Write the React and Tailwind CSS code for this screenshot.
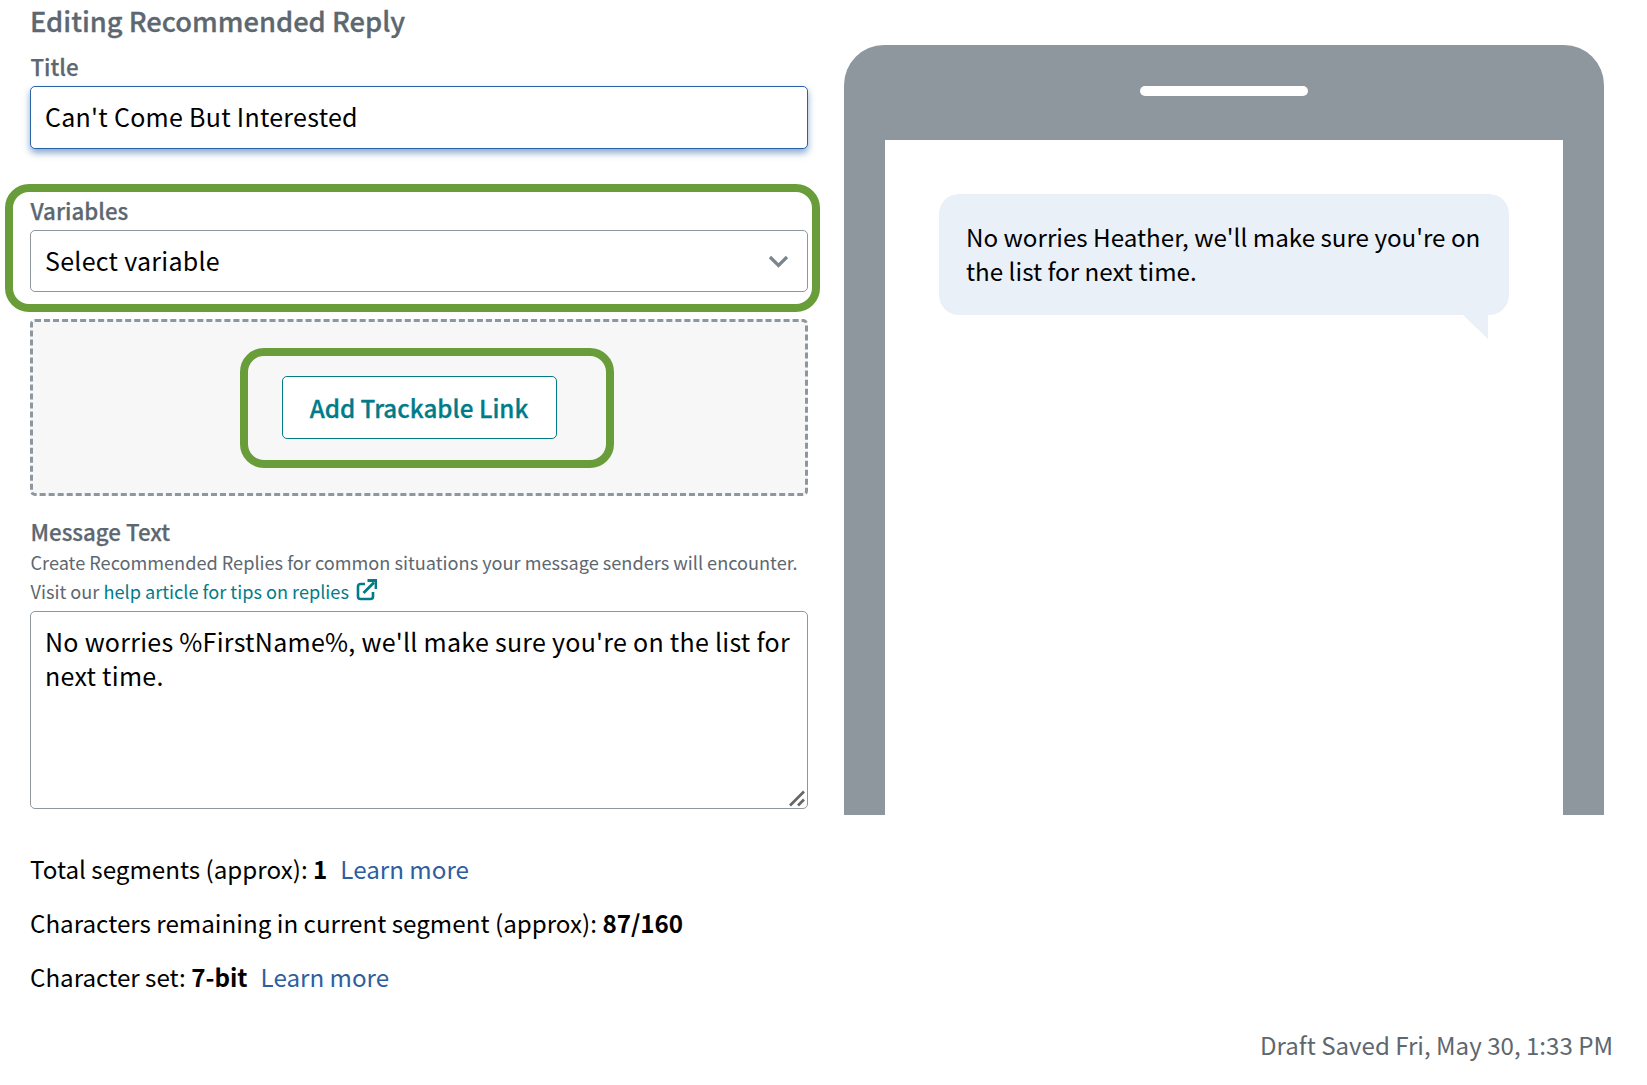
export default function App() {
  return (
    <div className="relative w-[1647px] h-[1085px] bg-white overflow-hidden font-['Noto_Sans_CJK_JP','Liberation_Sans',sans-serif] text-black">
      <div className="flex pl-[30px] gap-[36px]">
        <div className="w-[778px] shrink-0 flex flex-col">
          <h1 className="h-[44px] leading-[41px] text-[27.3px] font-medium text-[#5d6770] [-webkit-text-stroke:0.3px_#5d6770]">Editing Recommended Reply</h1>
          <label className="mt-[11px] ml-[0.5px] h-[22px] leading-[22px] text-[22.3px] font-medium text-[#5d6770] [-webkit-text-stroke:0.25px_#5d6770]">Title</label>
          <input readOnly value="Can't Come But Interested" className="mt-[9px] h-[63px] w-full rounded-[5px] border border-[#2a62a8] bg-white px-[14px] pb-[4px] text-[25px] tracking-[0.28px] shadow-[0_4px_7px_rgba(42,98,168,0.55)] outline-none" />
          <label className="mt-[50px] ml-[0.5px] h-[22px] leading-[22px] text-[22.3px] font-medium text-[#5d6770] [-webkit-text-stroke:0.25px_#5d6770]">Variables</label>
          <div className="mt-[9px] h-[62px] w-full rounded-[5px] border border-[#8f979e] bg-white pl-[14px] pr-[18px] flex items-center justify-between text-[25px] tracking-[0.28px]">
            <span>Select variable</span>
            <svg width="21" height="13" viewBox="0 0 21 13" fill="none"><path d="M2 2l8.500 8.500L19 2" stroke="#7b858d" strokeWidth="3.200" /></svg>
          </div>
          <div className="mt-[27px] h-[177px] rounded-[5px] border-[3px] border-dashed border-[#8f979e] bg-[#f7f7f7] flex items-center justify-center">
            <button className="h-[63px] w-[275px] pt-[1px] rounded-[5px] border border-[#007c89] bg-white text-[24.2px] font-medium text-[#007c89] [-webkit-text-stroke:0.3px_#007c89]">Add Trackable Link</button>
          </div>
          <label className="mt-[24px] ml-[0.5px] h-[22px] leading-[22px] text-[22.3px] font-medium text-[#5d6770] [-webkit-text-stroke:0.25px_#5d6770]">Message Text</label>
          <p className="mt-[6px] ml-[0.5px] text-[18.15px] leading-[29px] text-[#5d6770]">
            Create Recommended Replies for common situations your message senders will encounter.<br />
            Visit our <span className="text-[#007c89]">help article for tips on replies</span>
            <svg className="inline-block ml-[7px] align-[-2px]" width="21" height="22" viewBox="0 0 21 22" fill="none">
              <path d="M9 5H4.500A2.500 2.500 0 0 0 2 7.500V17.500A2.500 2.500 0 0 0 4.500 20H14.500A2.500 2.500 0 0 0 17 17.500V13" stroke="#007c89" strokeWidth="2.600" />
              <path d="M7.500 14L18 3.500" stroke="#007c89" strokeWidth="2.800" />
              <path d="M11.500 1.500H20V10" stroke="#007c89" strokeWidth="2.800" />
            </svg>
          </p>
          <div className="relative mt-[5px] h-[198px]">
            <textarea readOnly value="No worries %FirstName%, we'll make sure you're on the list for next time." className="block h-full w-full resize-none rounded-[5px] border border-[#8f979e] bg-white px-[14px] py-[12px] text-[25px] leading-[34px] tracking-[0.27px] outline-none" />
            <svg className="absolute right-[2px] bottom-[2px]" width="17" height="17" viewBox="0 0 17 17" fill="none">
              <path d="M1 15.500L15 1.500" stroke="#666" strokeWidth="2.600" />
              <path d="M9 15.500L15 9.500" stroke="#666" strokeWidth="2.600" />
            </svg>
          </div>
          <div className="mt-[33px] text-[24.2px] leading-[54px]">
            <div>Total segments (approx): <b className="font-bold">1</b><a className="ml-[13px] text-[#2d5fa0]">Learn more</a></div>
            <div>Characters remaining in current segment (approx): <b className="font-bold">87/160</b></div>
            <div>Character set: <b className="font-bold">7-bit</b><a className="ml-[13px] text-[#2d5fa0]">Learn more</a></div>
          </div>
        </div>
        <div className="mt-[45px] h-[770px] w-[760px] shrink-0 rounded-t-[40px] bg-[#8f979e] flex flex-col">
          <div className="mt-[41px] mx-auto h-[10px] w-[168px] rounded-[5px] bg-white" />
          <div className="mt-[44px] mx-[41px] flex-1 bg-white pt-[54px] px-[54px]">
            <div className="relative rounded-[20px] bg-[#e9f0f8] pl-[27px] pr-[20px] pt-[26px] pb-[27px] text-[24.2px] leading-[34px]">
              No worries Heather, we'll make sure you're on the list for next time.
              <svg className="absolute top-full right-[21px]" width="25" height="24" viewBox="0 0 25 24"><path d="M0 0H25V24Z" fill="#e9f0f8" /></svg>
            </div>
          </div>
        </div>
      </div>
      <div className="mt-[26px] pr-[34px] text-right text-[24.1px] leading-[30px] text-[#5d6770]">Draft Saved Fri, May 30, 1:33 PM</div>
      <div className="absolute left-[5px] top-[184px] w-[815px] h-[128px] rounded-[24px] border-[8px] border-[#689d39]" />
      <div className="absolute left-[240px] top-[348px] w-[374px] h-[120px] rounded-[24px] border-[8px] border-[#689d39]" />
    </div>
  );
}
